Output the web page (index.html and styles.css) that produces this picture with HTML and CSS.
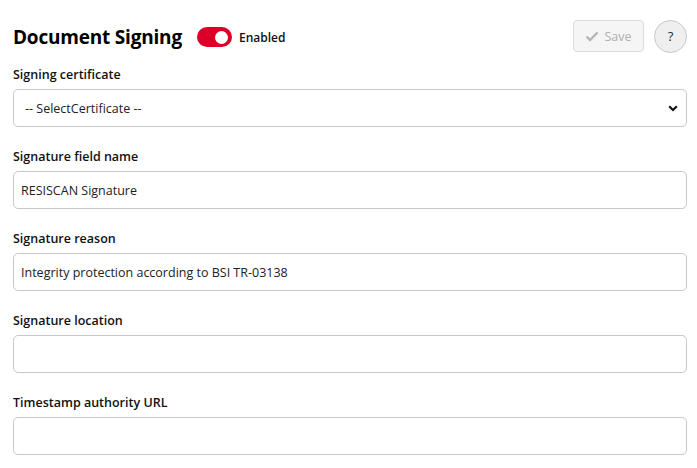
FILE: index.html
```html
<!DOCTYPE html>
<html>
<head>
<meta charset="utf-8">
<link rel="stylesheet" href="styles.css">
</head>
<body>
<div class="page">
  <div class="header">
    <h1 class="title">Document Signing</h1>
    <label class="switch">
      <span class="track"><span class="knob"></span></span>
      <span class="switch-label">Enabled</span>
    </label>
    <div class="spacer"></div>
    <button class="save" disabled>
      <svg width="14" height="11" viewBox="0 0 14 11"><path d="M1.5 5.5 L5 9 L12.5 1.5" fill="none" stroke="#b5b5b5" stroke-width="2.4"/></svg>
      <span>Save</span>
    </button>
    <button class="help">?</button>
  </div>

  <div class="field">
    <div class="label">Signing certificate</div>
    <div class="select">
      <span>-- SelectCertificate --</span>
      <svg width="10" height="7" viewBox="0 0 10 7"><path d="M1.2 1.3 L5 5 L8.8 1.3" fill="none" stroke="#111" stroke-width="2.2"/></svg>
    </div>
  </div>

  <div class="field">
    <div class="label">Signature field name</div>
    <div class="input">RESISCAN Signature</div>
  </div>

  <div class="field">
    <div class="label">Signature reason</div>
    <div class="input">Integrity protection according to BSI TR-03138</div>
  </div>

  <div class="field">
    <div class="label">Signature location</div>
    <div class="input"></div>
  </div>

  <div class="field">
    <div class="label">Timestamp authority URL</div>
    <div class="input"></div>
  </div>
</div>
</body>
</html>
```

FILE: styles.css
```css
* { box-sizing: border-box; }
html, body { margin: 0; padding: 0; background: #fff; }
body {
  font-family: "Open Sans", "Noto Sans", sans-serif;
  color: #111;
}
.page {
  padding: 20px 10px 0 13px;
}
.header {
  display: flex;
  align-items: center;
  height: 32px;
  margin-bottom: 13px;
}
.title {
  margin: 2px 0 0;
  font-size: 19px;
  font-weight: 700;
  color: #000;
  letter-spacing: -0.2px;
}
.switch {
  display: flex;
  align-items: center;
  margin: 2px 0 0 15px;
}
.track {
  width: 35px;
  height: 20px;
  border-radius: 10px;
  background: #dc0028;
  display: flex;
  align-items: center;
  justify-content: flex-end;
  padding-right: 4px;
}
.knob {
  width: 13px;
  height: 13px;
  border-radius: 50%;
  background: #fff;
}
.switch-label {
  margin-left: 7px;
  font-size: 12px;
  font-weight: 600;
  color: #111;
}
.spacer { flex: 1; }
.save {
  width: 71px;
  height: 32px;
  border: 1px solid #dcdcdc;
  border-radius: 4px;
  background: #f5f5f5;
  color: #b0b0b0;
  font-family: inherit;
  font-size: 12.5px;
  display: flex;
  align-items: center;
  justify-content: center;
  gap: 5px;
  padding: 0;
}
.help {
  width: 33px;
  height: 33px;
  margin-left: 10px;
  border-radius: 50%;
  border: 1px solid #c8c8c8;
  background: #efefef;
  font-family: inherit;
  font-size: 13px;
  color: #1a2a44;
  padding: 0;
}
.field { margin-bottom: 20px; }
.label {
  font-size: 12.5px;
  font-weight: 600;
  line-height: 20px;
  margin-bottom: 4px;
  color: #111;
}
.select, .input {
  height: 38px;
  border: 1px solid #c8c8c8;
  border-radius: 5px;
  font-size: 12.5px;
  color: #222;
  display: flex;
  align-items: center;
  padding: 0 7px;
}
.select {
  justify-content: space-between;
  padding: 0 8px 0 11px;
}
```
